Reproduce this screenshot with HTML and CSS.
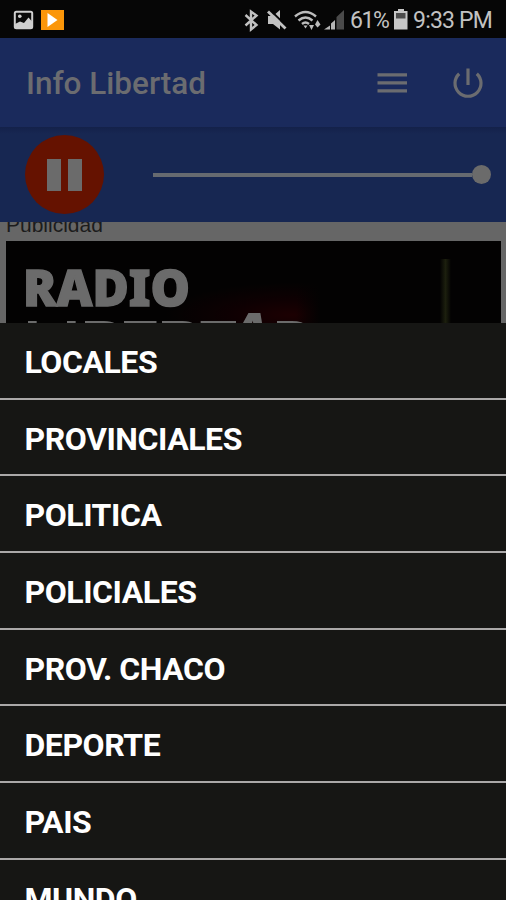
FILE: index.html
```
<!DOCTYPE html>
<html lang="es">
<head>
    <meta charset="UTF-8">
    <meta name="viewport" content="width=device-width, initial-scale=1.0">
    <title>Info Libertad</title>
    <link rel="stylesheet" href="styles.css">
</head>
<body>
    <div class="status-bar">
        <svg class="notif-icons" width="52" height="22" viewBox="0 0 52 22">
            <rect x="1.8" y="1.7" width="17.4" height="16.6" rx="1.5" fill="#0a0a0a" stroke="#cfcfcf" stroke-width="2"/>
            <circle cx="6.8" cy="6.3" r="1.8" fill="#cfcfcf"/>
            <path d="M2 14l5-2.500 4 1.500 4.500-5.500 3.500 4v6.500H2z" fill="#cfcfcf"/>
            <rect x="28" y="0" width="23" height="20" fill="#fb9609"/>
            <path d="M34.500 3l10 7-10 7z" fill="#fff"/>
        </svg>
        <div class="status-right">
            <svg width="102" height="24" viewBox="0 0 102 24">
                <path d="M1.500 6l11 10-5.500 4.500V2.500l5.500 4-11 10" fill="none" stroke="#c2c2c2" stroke-width="2.400"/>
                <path d="M24 7h5l7-6v19.500L29 15h-5z" fill="#c2c2c2"/>
                <path d="M26 1l17.500 17" stroke="#060606" stroke-width="2"/>
                <path d="M24 2.500l17.500 17" stroke="#c2c2c2" stroke-width="2.800"/>
                <path d="M51 7.500q10.500-9 21 0M54.500 11.500q7-6 14 0M58 15q3.500-3 7 0" fill="none" stroke="#bcbcbc" stroke-width="2.400"/>
                <path d="M59.500 16.500h4l-2 3z" fill="#bcbcbc"/>
                <path d="M65 16h5l-2.500 5zM71 15.500l2.500-4.500 3 4.500-3 3z" fill="#bcbcbc"/>
                <path d="M80 20.500l6-4v4z" fill="#b5b5b5"/>
                <path d="M87 14.500l4-3.500v9.500h-4z" fill="#b5b5b5"/>
                <path d="M92.500 8l7.500-7v19.500h-7.500z" fill="#4a4a4a"/>
            </svg>
            <span class="battery-text">61%</span>
            <svg width="14" height="21" viewBox="0 0 14 21">
                <path d="M4 0h6v2h3.500v18.500H0V2h4z" fill="#c6c6c6"/>
                <rect x="2" y="4" width="9.500" height="5.500" fill="#4c4c4c"/>
            </svg>
            <span class="clock">9:33 PM</span>
        </div>
    </div>

    <header class="toolbar">
        <h1>Info Libertad</h1>
        <svg class="menu-icon" width="30" height="20" viewBox="0 0 30 20">
            <path d="M.5 1.800h29.500M.5 9.800h29.500M.5 17.800h29.500" stroke="#6b6c70" stroke-width="3.200"/>
        </svg>
        <svg class="power-icon" width="32" height="32" viewBox="0 0 32 32">
            <path d="M16 1.500v16.500M7.200 6.700a13 13 0 1 0 17.600 0" fill="none" stroke="#6b6c70" stroke-width="3.200"/>
        </svg>
    </header>

    <section class="player">
        <div class="pause-btn">
            <span></span>
            <span></span>
        </div>
        <div class="volume">
            <div class="track"></div>
            <div class="thumb"></div>
        </div>
    </section>

    <section class="content">
        <div class="ad-label">Publicidad</div>
        <div class="banner">
            <svg width="495" height="82" viewBox="0 0 495 82">
                <text class="radio" x="17" y="65" textLength="167" lengthAdjust="spacingAndGlyphs">RADIO</text>
                <text class="libertad" y="121" x="18 57 75 114 152 194">LIBERT<tspan class="big" x="217">A</tspan><tspan x="267">D</tspan></text>
            </svg>
        </div>
    </section>

    <ul class="menu">
        <li>LOCALES</li>
        <li>PROVINCIALES</li>
        <li>POLITICA</li>
        <li>POLICIALES</li>
        <li>PROV. CHACO</li>
        <li>DEPORTE</li>
        <li>PAIS</li>
        <li>MUNDO</li>
    </ul>
</body>
</html>
```

FILE: styles.css
```
* {
    box-sizing: border-box;
}

body {
    margin: 0;
    height: 900px;
    overflow: hidden;
    background-color: #161614;
    font-family: Roboto, sans-serif;
}

.status-bar {
    display: flex;
    justify-content: space-between;
    height: 38px;
    padding: 10px 13px 0 13px;
    background-color: #060606;
    color: #c2c2c2;
}

.status-right {
    display: flex;
    align-items: flex-start;
    margin-top: -1px;
}

.battery-text,
.clock {
    font-size: 23px;
    line-height: 23px;
    letter-spacing: -0.8px;
    white-space: nowrap;
}

.battery-text {
    width: 48px;
    padding-left: 4px;
    letter-spacing: -1.4px;
}

.clock {
    width: 85px;
    padding-left: 5px;
}

.toolbar {
    display: flex;
    align-items: center;
    height: 89px;
    padding: 0 22px 0 26px;
    background-color: #1a2a5c;
}

.toolbar h1 {
    flex: 1;
    margin: 0;
    padding-top: 2px;
    font-size: 31.5px;
    font-weight: 500;
    color: #6b6c70;
}

.menu-icon {
    margin-right: 45px;
}

.player {
    display: flex;
    align-items: center;
    height: 95px;
    padding: 0 15px 0 25px;
    background: linear-gradient(#14214a, #172752 7px);
}

.pause-btn {
    display: flex;
    justify-content: center;
    align-items: center;
    gap: 7px;
    width: 79px;
    height: 79px;
    margin-right: 49px;
    border-radius: 50%;
    background-color: #651200;
}

.pause-btn span {
    width: 14px;
    height: 32px;
    background-color: #6b6b6b;
}

.volume {
    flex: 1;
    display: flex;
    align-items: center;
}

.track {
    flex: 1;
    height: 4px;
    background-color: #666a70;
}

.thumb {
    width: 19px;
    height: 19px;
    border-radius: 50%;
    background-color: #6b6b6b;
}

.content {
    height: 101px;
    padding: 0 5px 0 6px;
    overflow: hidden;
    background-color: #666;
}

.ad-label {
    display: flex;
    align-items: flex-end;
    height: 19px;
    padding-bottom: 4px;
    line-height: 24px;
    overflow: hidden;
    font-family: "Liberation Sans", sans-serif;
    font-size: 21px;
    color: #1c1c1c;
}

.banner {
    height: 82px;
    background:
        linear-gradient(90deg, transparent, #1c1f0e 50%, transparent) 434px 18px / 11px 64px no-repeat,
        linear-gradient(90deg, transparent, #030202) 290px 0 / 24px 82px no-repeat,
        radial-gradient(ellipse at 285px 74px, #1c0002, #0e0002 60px, transparent 125px) 0 0 / 314px 82px no-repeat,
        #030202;
}

.banner svg {
    display: block;
}

.radio {
    font-family: "Noto Sans", sans-serif;
    font-size: 49px;
    font-weight: 900;
    fill: #6b6b6b;
    stroke: #6b6b6b;
    stroke-width: 1.5px;
}

.libertad {
    font-family: "Liberation Sans", sans-serif;
    font-size: 60px;
    font-weight: bold;
    fill: #6b6b6b;
}

.libertad .big {
    font-size: 70px;
    font-style: italic;
}

.menu {
    margin: 0;
    padding: 0;
    list-style: none;
}

.menu li {
    height: 76.67px;
    padding-left: 24.5px;
    line-height: 78px;
    font-size: 32px;
    font-weight: bold;
    letter-spacing: -0.45px;
    color: #fff;
    border-bottom: 2px solid #aaa8a8;
}
```
